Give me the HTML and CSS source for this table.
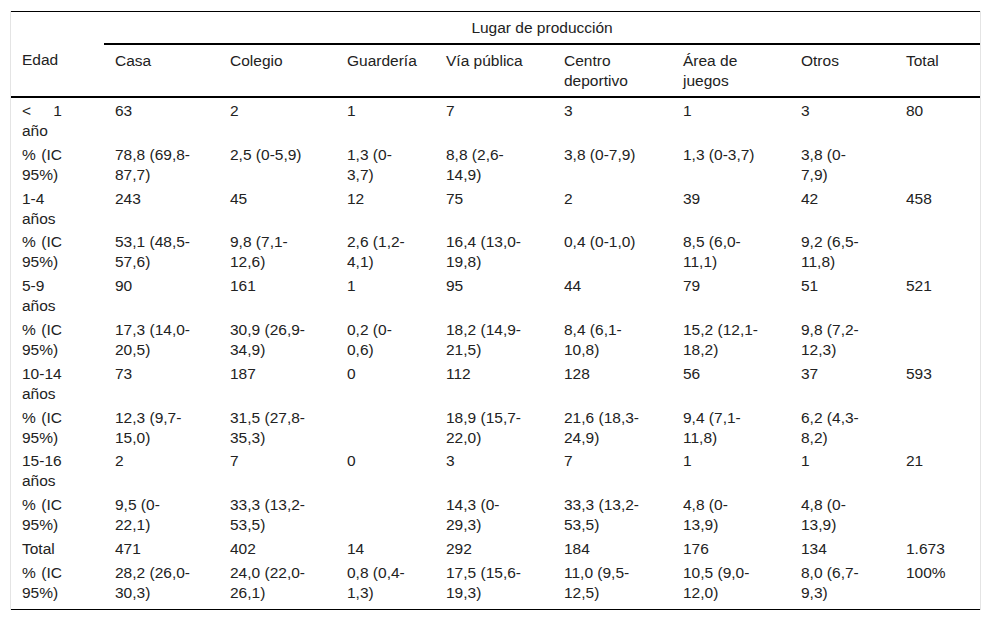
FILE: index.html
```html
<!DOCTYPE html>
<html lang="es">
<head>
<meta charset="utf-8">
<title>Lugar de producción por edad</title>
<link rel="stylesheet" href="styles.css">
</head>
<body>
<div class="wrap">
<table class="data">
<colgroup>
<col class="c1"><col class="c2"><col class="c3"><col class="c4"><col class="c5"><col class="c6"><col class="c7"><col class="c8"><col class="c9">
</colgroup>
<thead>
<tr class="top">
<td class="blank"></td>
<th colspan="8" class="group">Lugar de producción</th>
</tr>
<tr class="cols">
<th>Edad</th>
<th>Casa</th>
<th>Colegio</th>
<th>Guardería</th>
<th>Vía pública</th>
<th>Centro deportivo</th>
<th>Área de juegos</th>
<th>Otros</th>
<th>Total</th>
</tr>
</thead>
<tbody>
<tr><td>&lt; 1 año</td><td>63</td><td>2</td><td>1</td><td>7</td><td>3</td><td>1</td><td>3</td><td>80</td></tr>
<tr><td>% (IC 95%)</td><td>78,8 (69,8-<wbr>87,7)</td><td>2,5 (0-<wbr>5,9)</td><td>1,3 (0-<wbr>3,7)</td><td>8,8 (2,6-<wbr>14,9)</td><td>3,8 (0-<wbr>7,9)</td><td>1,3 (0-<wbr>3,7)</td><td>3,8 (0-<wbr>7,9)</td><td></td></tr>
<tr><td>1-4 años</td><td>243</td><td>45</td><td>12</td><td>75</td><td>2</td><td>39</td><td>42</td><td>458</td></tr>
<tr><td>% (IC 95%)</td><td>53,1 (48,5-<wbr>57,6)</td><td>9,8 (7,1-<wbr>12,6)</td><td>2,6 (1,2-<wbr>4,1)</td><td>16,4 (13,0-<wbr>19,8)</td><td>0,4 (0-<wbr>1,0)</td><td>8,5 (6,0-<wbr>11,1)</td><td>9,2 (6,5-<wbr>11,8)</td><td></td></tr>
<tr><td>5-9 años</td><td>90</td><td>161</td><td>1</td><td>95</td><td>44</td><td>79</td><td>51</td><td>521</td></tr>
<tr><td>% (IC 95%)</td><td>17,3 (14,0-<wbr>20,5)</td><td>30,9 (26,9-<wbr>34,9)</td><td>0,2 (0-<wbr>0,6)</td><td>18,2 (14,9-<wbr>21,5)</td><td>8,4 (6,1-<wbr>10,8)</td><td>15,2 (12,1-<wbr>18,2)</td><td>9,8 (7,2-<wbr>12,3)</td><td></td></tr>
<tr><td>10-14 años</td><td>73</td><td>187</td><td>0</td><td>112</td><td>128</td><td>56</td><td>37</td><td>593</td></tr>
<tr><td>% (IC 95%)</td><td>12,3 (9,7-<wbr>15,0)</td><td>31,5 (27,8-<wbr>35,3)</td><td></td><td>18,9 (15,7-<wbr>22,0)</td><td>21,6 (18,3-<wbr>24,9)</td><td>9,4 (7,1-<wbr>11,8)</td><td>6,2 (4,3-<wbr>8,2)</td><td></td></tr>
<tr><td>15-16 años</td><td>2</td><td>7</td><td>0</td><td>3</td><td>7</td><td>1</td><td>1</td><td>21</td></tr>
<tr><td>% (IC 95%)</td><td>9,5 (0-<wbr>22,1)</td><td>33,3 (13,2-<wbr>53,5)</td><td></td><td>14,3 (0-<wbr>29,3)</td><td>33,3 (13,2-<wbr>53,5)</td><td>4,8 (0-<wbr>13,9)</td><td>4,8 (0-<wbr>13,9)</td><td></td></tr>
<tr><td>Total</td><td>471</td><td>402</td><td>14</td><td>292</td><td>184</td><td>176</td><td>134</td><td>1.673</td></tr>
<tr class="last"><td>% (IC 95%)</td><td>28,2 (26,0-<wbr>30,3)</td><td>24,0 (22,0-<wbr>26,1)</td><td>0,8 (0,4-<wbr>1,3)</td><td>17,5 (15,6-<wbr>19,3)</td><td>11,0 (9,5-<wbr>12,5)</td><td>10,5 (9,0-<wbr>12,0)</td><td>8,0 (6,7-<wbr>9,3)</td><td>100%</td></tr>
</tbody>
</table>
</div>
</body>
</html>
```

FILE: styles.css
```css
html, body {
  margin: 0;
  padding: 0;
  background: #ffffff;
}

body {
  font-family: "Liberation Sans", Arial, sans-serif;
  font-size: 15.5px;
  color: #222222;
}

.wrap {
  margin: 11px 0 0 10px;
  width: 971px;
  box-sizing: border-box;
  border-left: 1px solid #e4e4e4;
  border-right: 1px solid #e4e4e4;
}

.data {
  width: 969px;
  border-collapse: collapse;
  table-layout: fixed;
  border-top: 1px solid #000000;
  border-bottom: 1px solid #000000;
}

.c1 { width: 93px; }
.c2 { width: 115px; }
.c3 { width: 117px; }
.c4 { width: 99px; }
.c5 { width: 118px; }
.c6 { width: 119px; }
.c7 { width: 118px; }
.c8 { width: 105px; }
.c9 { width: 85px; }

.data th,
.data td {
  font-weight: normal;
  text-align: left;
  vertical-align: top;
  line-height: 20px;
  padding: 3px 20px 0.8px 11px;
}

.data thead th,
.data thead td {
  padding-top: 6px;
  padding-bottom: 5px;
}

.data tbody .last td {
  padding-bottom: 6px;
}

.data .top .group {
  text-align: center;
  padding-left: 0;
  padding-right: 0;
  border-bottom: 2px solid #000000;
}

.data .cols th {
  border-bottom: 2px solid #000000;
}

.data tbody td:nth-child(1) { text-align: justify; }

.data .cols th:nth-child(1), .data tbody td:nth-child(1) { padding-right: 42px; }
.data .cols th:nth-child(2), .data tbody td:nth-child(2) { padding-right: 27px; }
.data .cols th:nth-child(3), .data tbody td:nth-child(3) { padding-right: 28px; }
.data .cols th:nth-child(4), .data tbody td:nth-child(4) { padding-right: 17px; }
.data .cols th:nth-child(5), .data tbody td:nth-child(5) { padding-right: 27px; }
.data .cols th:nth-child(6), .data tbody td:nth-child(6) { padding-right: 28px; }
.data .cols th:nth-child(7), .data tbody td:nth-child(7) { padding-right: 30px; }
.data .cols th:nth-child(8), .data tbody td:nth-child(8) { padding-right: 32px; }
.data .cols th:nth-child(9), .data tbody td:nth-child(9) { padding-right: 20px; }
```
